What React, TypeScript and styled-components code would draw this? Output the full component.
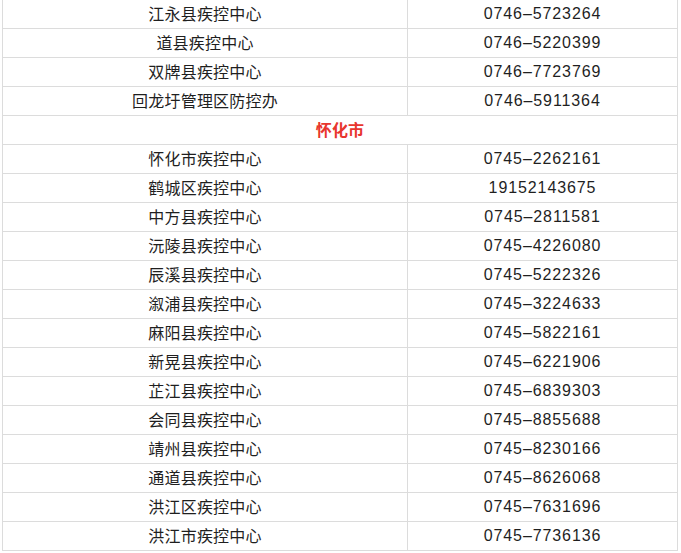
import React from "react";
import styled, { createGlobalStyle } from "styled-components";

const GlobalStyle = createGlobalStyle`
  html, body {
    margin: 0;
    padding: 0;
    background: #ffffff;
  }
  body {
    font-family: "Liberation Sans", "Noto Sans CJK SC", sans-serif;
    color: #1f1f1f;
  }
`;

const Page = styled.div`
  padding: 0 0 0 2px;
  margin-top: -1px;
`;

const Grid = styled.div`
  display: grid;
  grid-template-columns: 405px 270px;
  width: 676px;
  border-left: 1px solid #dcdcdc;
  border-top: 1px solid #dcdcdc;
`;

const Cell = styled.div<{ $span?: boolean; $kind?: "name" | "phone" | "city" }>`
  box-sizing: border-box;
  height: 29px;
  border-right: 1px solid #dcdcdc;
  border-bottom: 1px solid #dcdcdc;
  display: flex;
  align-items: center;
  justify-content: center;
  padding-bottom: ${(p) => (p.$kind === "phone" ? "0" : "2px")};
  grid-column: ${(p) => (p.$span ? "1 / span 2" : "auto")};
  font-size: 16px;
  line-height: 20px;
  font-family: ${(p) =>
    p.$kind === "phone"
      ? '"Liberation Sans", "Noto Sans CJK SC", sans-serif'
      : '"Noto Sans CJK SC", sans-serif'};
  font-weight: ${(p) => (p.$kind === "city" ? 700 : 400)};
  color: ${(p) => (p.$kind === "city" ? "#e8362e" : "#1f1f1f")};
  letter-spacing: ${(p) => (p.$kind === "phone" ? "0.9px" : "0.2px")};
  white-space: nowrap;
`;

type Row = { name: string; phone: string } | { city: string };

const rows: Row[] = [
  { name: "江永县疾控中心", phone: "0746–5723264" },
  { name: "道县疾控中心", phone: "0746–5220399" },
  { name: "双牌县疾控中心", phone: "0746–7723769" },
  { name: "回龙圩管理区防控办", phone: "0746–5911364" },
  { city: "怀化市" },
  { name: "怀化市疾控中心", phone: "0745–2262161" },
  { name: "鹤城区疾控中心", phone: "19152143675" },
  { name: "中方县疾控中心", phone: "0745–2811581" },
  { name: "沅陵县疾控中心", phone: "0745–4226080" },
  { name: "辰溪县疾控中心", phone: "0745–5222326" },
  { name: "溆浦县疾控中心", phone: "0745–3224633" },
  { name: "麻阳县疾控中心", phone: "0745–5822161" },
  { name: "新晃县疾控中心", phone: "0745–6221906" },
  { name: "芷江县疾控中心", phone: "0745–6839303" },
  { name: "会同县疾控中心", phone: "0745–8855688" },
  { name: "靖州县疾控中心", phone: "0745–8230166" },
  { name: "通道县疾控中心", phone: "0745–8626068" },
  { name: "洪江区疾控中心", phone: "0745–7631696" },
  { name: "洪江市疾控中心", phone: "0745–7736136" },
];

export default function App() {
  return (
    <>
      <GlobalStyle />
      <Page>
        <Grid>
          {rows.map((r, i) =>
            "city" in r ? (
              <Cell key={i} $span $kind="city">
                {r.city}
              </Cell>
            ) : (
              <React.Fragment key={i}>
                <Cell $kind="name">{r.name}</Cell>
                <Cell $kind="phone">{r.phone}</Cell>
              </React.Fragment>
            )
          )}
        </Grid>
      </Page>
    </>
  );
}
